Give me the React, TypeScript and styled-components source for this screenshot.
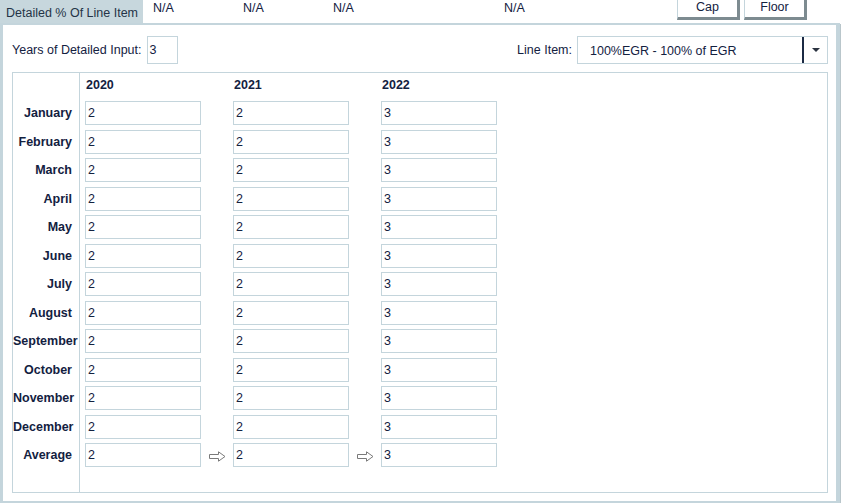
import React from "react";
import styled, { createGlobalStyle } from "styled-components";

const GlobalStyle = createGlobalStyle`
  html, body {
    margin: 0;
    padding: 0;
    background: #ffffff;
    font-family: "Liberation Sans", Arial, sans-serif;
    color: #13213f;
  }
`;

const BORDER = "#c4d5dc";

const months = [
  "January",
  "February",
  "March",
  "April",
  "May",
  "June",
  "July",
  "August",
  "September",
  "October",
  "November",
  "December",
];

const years = [
  { year: "2020", value: "2" },
  { year: "2021", value: "2" },
  { year: "2022", value: "3" },
];

const Page = styled.div`
  width: 841px;
  height: 503px;
  display: flex;
  flex-direction: column;
  font-size: 12.5px;
`;

const TopBar = styled.div`
  height: 23px;
  display: flex;
  align-items: flex-start;
`;

const Tab = styled.div`
  width: 143px;
  height: 23px;
  background: #c7d7dd;
  color: #243447;
  display: flex;
  align-items: center;
  padding-left: 6px;
  padding-top: 2px;
  box-sizing: border-box;
  white-space: nowrap;
`;

const NA = styled.div<{ $w: number; $first?: boolean }>`
  width: ${(p) => p.$w}px;
  margin-left: ${(p) => (p.$first ? 10 : 0)}px;
  padding-top: 1px;
  white-space: nowrap;
`;

const Buttons = styled.div`
  display: flex;
  gap: 4px;
  margin-left: auto;
  margin-right: 34px;
`;

const Btn = styled.button`
  height: 22px;
  width: 63px;
  background: #ffffff;
  border-style: solid;
  border-width: 1px 3px 3px 1px;
  border-color: ${BORDER} #7d8b90 #7d8b90 ${BORDER};
  font-family: inherit;
  font-size: 12.5px;
  color: #13213f;
  padding: 0 0 3px;
  margin-top: -2px;
`;

const Panel = styled.div`
  flex: 1;
  border-style: solid;
  border-color: ${BORDER};
  border-width: 2px 4px 2px 3px;
  margin-right: 1px;
  box-shadow: 1px 1px 0 #b9c6cb;
  padding: 11px 8px 8px 9px;
  display: flex;
  flex-direction: column;
  gap: 8px;
`;

const Controls = styled.div`
  display: flex;
  align-items: center;
  height: 28px;
`;

const Label = styled.span`
  margin-right: 5px;
  white-space: nowrap;
`;

const SmallInput = styled.div`
  width: 31px;
  height: 28px;
  box-sizing: border-box;
  border: 1px solid ${BORDER};
  padding: 6px 0 0 2px;
`;

const Spacer = styled.div`
  flex: 1;
`;

const Select = styled.div`
  width: 251px;
  height: 28px;
  box-sizing: border-box;
  border: 1px solid ${BORDER};
  display: flex;
  align-items: center;
`;

const SelectText = styled.div`
  flex: 1;
  padding-left: 12px;
  padding-top: 1px;
`;

const SelectButton = styled.div`
  width: 23px;
  height: 100%;
  border-left: 2px solid #1b2a44;
  display: flex;
  align-items: center;
  justify-content: center;
`;

const Caret = styled.div`
  width: 0;
  height: 0;
  border-left: 4px solid transparent;
  border-right: 4px solid transparent;
  border-top: 4px solid #2b3340;
`;

const Grid = styled.div`
  flex: 1;
  border: 1px solid ${BORDER};
  display: flex;
`;

const LabelCol = styled.div`
  width: 66px;
  border-right: 1px solid ${BORDER};
  display: flex;
  flex-direction: column;
  padding-top: 28px;
`;

const MonthLabel = styled.div`
  height: 28.5px;
  box-sizing: border-box;
  text-align: right;
  padding-right: 7px;
  font-weight: bold;
  white-space: nowrap;
  line-height: 24px;
`;

const DataArea = styled.div`
  display: flex;
  padding-left: 5px;
`;

const Column = styled.div`
  display: flex;
  flex-direction: column;
  width: 116px;
`;

const ArrowCol = styled.div`
  width: 32px;
  display: flex;
  flex-direction: column;
  padding-top: 28px;
`;

const ArrowCell = styled.div`
  height: 28.5px;
  display: flex;
  align-items: center;
  justify-content: center;
  padding-bottom: 2px;
  box-sizing: border-box;
`;

const YearHead = styled.div`
  height: 28px;
  font-weight: bold;
  padding-left: 1px;
  padding-top: 5px;
  box-sizing: border-box;
`;

const Cell = styled.div`
  height: 28.5px;
`;

const ValueBox = styled.div`
  width: 116px;
  height: 24px;
  box-sizing: border-box;
  border: 1px solid ${BORDER};
  padding: 4px 0 0 2px;
  color: #13213f;
`;

const Arrow = () => (
  <svg width="17" height="11" viewBox="0 0 17 11">
    <path
      d="M0.5 3.5 H9.5 V0.8 L16 5.5 L9.5 10.2 V7.5 H0.5 Z"
      fill="#ffffff"
      stroke="#7a7a7a"
      strokeWidth="1"
    />
  </svg>
);

export default function App() {
  const rows = [...months, "Average"];
  return (
    <Page>
      <GlobalStyle />
      <TopBar>
        <Tab>Detailed % Of Line Item</Tab>
        <NA $w={90} $first>N/A</NA>
        <NA $w={90}>N/A</NA>
        <NA $w={171}>N/A</NA>
        <NA $w={40}>N/A</NA>
        <Buttons>
          <Btn>Cap</Btn>
          <Btn>Floor</Btn>
        </Buttons>
      </TopBar>
      <Panel>
        <Controls>
          <Label>Years of Detailed Input:</Label>
          <SmallInput>3</SmallInput>
          <Spacer />
          <Label>Line Item:</Label>
          <Select>
            <SelectText>100%EGR - 100% of EGR</SelectText>
            <SelectButton>
              <Caret />
            </SelectButton>
          </Select>
        </Controls>
        <Grid>
          <LabelCol>
            {rows.map((m) => (
              <MonthLabel key={m}>{m}</MonthLabel>
            ))}
          </LabelCol>
          <DataArea>
            {years.map((y, i) => (
              <React.Fragment key={y.year}>
                {i > 0 && (
                  <ArrowCol>
                    {rows.map((m) => (
                      <ArrowCell key={m}>{m === "Average" && <Arrow />}</ArrowCell>
                    ))}
                  </ArrowCol>
                )}
                <Column>
                  <YearHead>{y.year}</YearHead>
                  {rows.map((m) => (
                    <Cell key={m}>
                      <ValueBox>{y.value}</ValueBox>
                    </Cell>
                  ))}
                </Column>
              </React.Fragment>
            ))}
          </DataArea>
        </Grid>
      </Panel>
    </Page>
  );
}
